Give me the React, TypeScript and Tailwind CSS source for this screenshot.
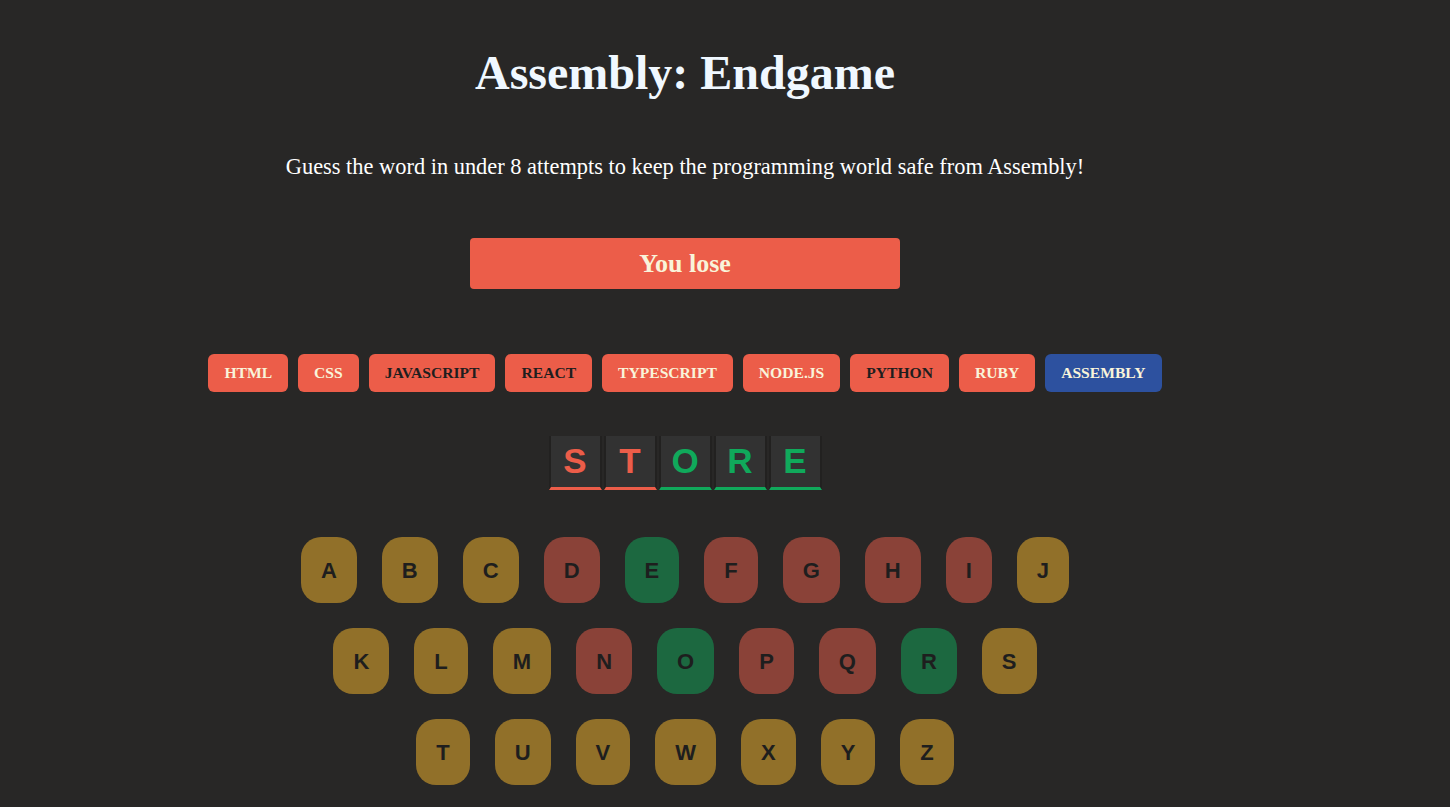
const languages = [
  { name: 'HTML', color: '#F9F4DA', bg: '#EC5D49' },
  { name: 'CSS', color: '#F9F4DA', bg: '#EC5D49' },
  { name: 'JAVASCRIPT', color: '#1E1E1E', bg: '#EC5D49' },
  { name: 'REACT', color: '#1E1E1E', bg: '#EC5D49' },
  { name: 'TYPESCRIPT', color: '#F9F4DA', bg: '#EC5D49' },
  { name: 'NODE.JS', color: '#F9F4DA', bg: '#EC5D49' },
  { name: 'PYTHON', color: '#1E1E1E', bg: '#EC5D49' },
  { name: 'RUBY', color: '#F9F4DA', bg: '#EC5D49' },
  { name: 'ASSEMBLY', color: '#F9F4DA', bg: '#2D519F' },
]

const word = [
  { ch: 'S', hit: false },
  { ch: 'T', hit: false },
  { ch: 'O', hit: true },
  { ch: 'R', hit: true },
  { ch: 'E', hit: true },
]

const rows = ['ABCDEFGHIJ', 'KLMNOPQRS', 'TUVWXYZ']
const right = 'EOR'.split('')
const wrong = 'DFGHINPQ'.split('')

function keyClass(l: string) {
  if (right.includes(l)) return 'bg-[#1C6840]'
  if (wrong.includes(l)) return 'bg-[#8A4238]'
  return 'bg-[#917029]'
}

export default function App() {
  return (
    <div className="min-h-screen w-full bg-[#282726]">
      <main className="w-[1370px] flex flex-col items-center pt-[45px] pb-6">
        {/* Header */}
        <h1 className="font-['Liberation_Serif',serif] text-[48px] font-bold text-[#F0F8FF] leading-[55px]">
          Assembly: Endgame
        </h1>
        <p className="mt-[54px] font-['Liberation_Serif',serif] text-[22.4px] text-white leading-[26px]">
          Guess the word in under 8 attempts to keep the programming world safe from Assembly!
        </p>

        {/* Status */}
        <section className="mt-[58px] w-[430px] h-[51px] rounded-[4px] bg-[#EC5D49] flex items-center justify-center">
          <h2 className="font-['Liberation_Serif',serif] text-[26px] font-bold text-[#F9F4DA]">You lose</h2>
        </section>

        {/* Languages */}
        <section className="mt-[65px] flex gap-[10px]">
          {languages.map(lang => (
            <span
              key={lang.name}
              className="h-[38px] px-4 rounded-[6px] flex items-center font-['Liberation_Serif',serif] text-[15.6px] font-bold"
              style={{ backgroundColor: lang.bg, color: lang.color }}
            >
              {lang.name}
            </span>
          ))}
        </section>

        {/* Word */}
        <section className="mt-[44px] flex gap-[2px]">
          {word.map((w, i) => (
            <span
              key={i}
              className={`w-[53px] h-[54px] flex items-center justify-center bg-[#323232] border-x-2 border-t-0 border-b-[3px] border-x-[#222120] font-['Liberation_Sans',Arial,sans-serif] text-[35px] font-bold ${
                w.hit ? 'text-[#10A95B] border-b-[#10A95B]' : 'text-[#EC5D49] border-b-[#EC5D49]'
              }`}
            >
              {w.ch}
            </span>
          ))}
        </section>

        {/* Keyboard */}
        <section className="mt-[47px] flex flex-col items-center gap-[25px]">
          {rows.map(row => (
            <div key={row} className="flex gap-[25px]">
              {row.split('').map(l => (
                <button
                  key={l}
                  className={`h-[66px] px-5 rounded-[20px] text-[#1E1E1E] font-['Liberation_Sans',Arial,sans-serif] text-[22px] font-bold ${keyClass(l)}`}
                >
                  {l}
                </button>
              ))}
            </div>
          ))}
        </section>
      </main>
    </div>
  )
}
